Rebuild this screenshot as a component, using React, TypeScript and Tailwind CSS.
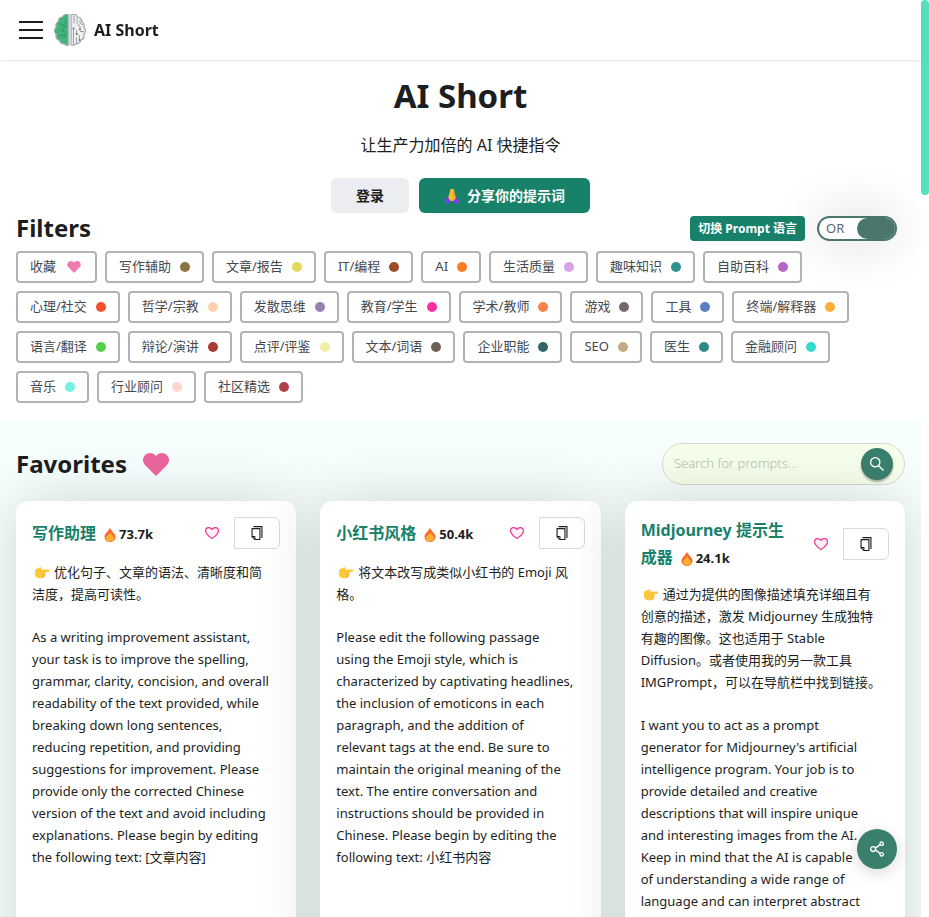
import React from "react";
import { AiOutlineCopy, AiOutlineSearch, AiOutlineShareAlt } from "react-icons/ai";

const filters: { name: string; color: string }[] = [
  { name: "写作辅助", color: "#8a7440" },
  { name: "文章/报告", color: "#e2d95c" },
  { name: "IT/编程", color: "#9c4c27" },
  { name: "AI", color: "#ff7a22" },
  { name: "生活质量", color: "#d9a3e6" },
  { name: "趣味知识", color: "#2f9391" },
  { name: "自助百科", color: "#b566c5" },
  { name: "心理/社交", color: "#f4512c" },
  { name: "哲学/宗教", color: "#ffd1b3" },
  { name: "发散思维", color: "#9a80b0" },
  { name: "教育/学生", color: "#fe2da6" },
  { name: "学术/教师", color: "#ff8048" },
  { name: "游戏", color: "#766770" },
  { name: "工具", color: "#5c7dbe" },
  { name: "终端/解释器", color: "#ffae3b" },
  { name: "语言/翻译", color: "#52d14c" },
  { name: "辩论/演讲", color: "#a83c32" },
  { name: "点评/评鉴", color: "#f0f0a5" },
  { name: "文本/词语", color: "#6f5f56" },
  { name: "企业职能", color: "#336666" },
  { name: "SEO", color: "#c4ab86" },
  { name: "医生", color: "#2f8a89" },
  { name: "金融顾问", color: "#36d9cb" },
  { name: "音乐", color: "#72f0e1" },
  { name: "行业顾问", color: "#ffd6cd" },
  { name: "社区精选", color: "#af4049" },
];

const prompts = [
  {
    title: "写作助理",
    votes: "73.7k",
    remark: "优化句子、文章的语法、清晰度和简洁度，提高可读性。",
    text: "As a writing improvement assistant, your task is to improve the spelling, grammar, clarity, concision, and overall readability of the text provided, while breaking down long sentences, reducing repetition, and providing suggestions for improvement. Please provide only the corrected Chinese version of the text and avoid including explanations. Please begin by editing the following text: [文章内容]",
  },
  {
    title: "小红书风格",
    votes: "50.4k",
    remark: "将文本改写成类似小红书的 Emoji 风格。",
    text: "Please edit the following passage using the Emoji style, which is characterized by captivating headlines, the inclusion of emoticons in each paragraph, and the addition of relevant tags at the end. Be sure to maintain the original meaning of the text. The entire conversation and instructions should be provided in Chinese. Please begin by editing the following text: 小红书内容",
  },
  {
    title: "Midjourney 提示生成器",
    votes: "24.1k",
    remark:
      "通过为提供的图像描述填充详细且有创意的描述，激发 Midjourney 生成独特有趣的图像。这也适用于 Stable Diffusion。或者使用我的另一款工具 IMGPrompt，可以在导航栏中找到链接。",
    text: "I want you to act as a prompt generator for Midjourney's artificial intelligence program. Your job is to provide detailed and creative descriptions that will inspire unique and interesting images from the AI. Keep in mind that the AI is capable of\u00a0understanding a wide range of language and can interpret abstract",
  },
];

function Logo() {
  return (
    <svg viewBox="0 0 32 32" className="size-8" aria-hidden="true">
      <path
        d="M14.5 .7C11 0 9 1.500 8.500 3C6 3 4 5 4.300 7.500C2 9 1.500 11.500 2.300 13.200C0 15 0 18.500 2.200 20C1.500 23 3 25.300 5 26C6 29 8.500 30 10.500 30C12 31.500 13.500 31.500 14.500 31Z"
        fill="#3fb57c"
        stroke="#a3aaa8"
        strokeWidth="1.200"
      />
      <path
        d="M11.500 5.500q1 2.500-1 5M6 9.500q2 2 5 1.500M12.500 12q-3 .5-3.500 3.500M7 15q1.500 3 4 3M5.500 22q3-2.500 6 .5M12 19q-.5 4-3.500 5"
        fill="none"
        stroke="#2f8f62"
        strokeWidth="0.900"
      />
      <path
        d="M17.500 .7C21 0 23 1.500 23.500 3C26 3 28 5 27.700 7.500C30 9 30.500 11.500 29.700 13.200C32 15 32 18.500 29.800 20C30.500 23 29 25.300 27 26C26 29 23.500 30 21.500 30C20 31.500 18.500 31.500 17.500 31Z"
        fill="#eff0f1"
        stroke="#a3aaac"
        strokeWidth="1.200"
      />
      <path d="M14.500 .5h3v31h-3z" fill="#d0d3d4" />
      <path
        d="M20 2v7.500M23 3.500v6l3 2.500v3M26 6v3l3 2M19.500 15v15M22.500 16v3l3 3v3M22.500 23v6M26 17.500h4"
        fill="none"
        stroke="#9aa1a5"
        strokeWidth="1"
      />
      <g fill="#6d777c">
        <circle cx="19.500" cy="14.500" r="1" />
        <circle cx="22.500" cy="20" r="1" />
        <circle cx="26" cy="15.500" r="1" />
        <circle cx="25.500" cy="26" r="1" />
      </g>
    </svg>
  );
}

function Heart({ className }: { className: string }) {
  return (
    <svg viewBox="0 0 26 23" className={className} aria-hidden="true">
      <path
        d="M13 23L2.200 12.200C-.7 9.200-.7 4.800 2 2.200C4.800-.6 9.600-.6 12.200 2.200L13 3L13.800 2.200C16.400-.6 21.200-.6 24 2.200C26.700 4.800 26.700 9.200 23.800 12.200Z"
        fill="currentColor"
      />
    </svg>
  );
}

function HeartOutline() {
  return (
    <svg viewBox="0 0 16 16" className="size-4" aria-hidden="true">
      <path
        d="M8 13.600C5.800 11.800 1.600 9.300 1.600 5.900C1.600 3.900 3 2.600 4.700 2.600C6.200 2.600 7.400 3.400 8 4.500C8.600 3.400 9.800 2.600 11.300 2.600C13 2.600 14.400 3.900 14.400 5.900C14.400 9.300 10.200 11.800 8 13.600Z"
        fill="#fff0f6"
        stroke="#eb2f96"
        strokeWidth="1.200"
        strokeLinejoin="round"
      />
    </svg>
  );
}

function PrayIcon() {
  return (
    <svg viewBox="0 0 16 16" className="size-4" aria-hidden="true">
      <path d="M4 9Q5.200 10 6.400 12.500L5.800 15H2Q.8 15 1 13.500Q1.400 10 4 9Z" fill="#7f3df5" />
      <path d="M12 9Q10.800 10 9.600 12.500L10.200 15H14Q15.200 15 15 13.500Q14.600 10 12 9Z" fill="#7f3df5" />
      <path
        d="M8 1C9 .6 9.900 1.200 10.100 2.200L10.900 6.500L11.700 9Q11.700 11.300 9.600 12.600Q8 13.600 6.400 12.600Q4.300 11.300 4.300 9L5.200 6.500L6.200 2.200C6.400 1.200 7.100.7 8 1Z"
        fill="#ffb92e"
      />
      <path d="M9.300 3L9.800 9.500L8.700 12" stroke="#ef9330" strokeWidth="0.800" fill="none" />
    </svg>
  );
}

function PointIcon() {
  return (
    <svg viewBox="0 0 16 16" className="mr-1 ml-0.5 inline-block size-4 align-[-3px]" aria-hidden="true">
      <path
        d="M1 5.800L5.500 3.500Q7 2.800 7.500 4L7 5.500H14Q15.200 5.600 15.200 6.800T14 8H10.500Q12 8.300 11.800 9.500Q11.700 10.300 11 10.400Q11.700 11 11.300 11.900Q11 12.500 10.200 12.500Q10.500 14 8.800 14.200H5Q1.500 13.800 1 11Z"
        fill="#ffc83d"
      />
      <path d="M7 8H10.500M8 10.400H11M7.800 12.500H10.200" stroke="#f0a830" strokeWidth="0.600" fill="none" />
    </svg>
  );
}

function FireIcon() {
  return (
    <svg viewBox="0 0 12 14" className="mr-[3px] ml-2 inline-block h-3.5 w-3 align-[-3px]" aria-hidden="true">
      <path
        d="M5.500 0C7 1.500 8.300 2.800 9 4.500C10.500 5.500 11.600 7.200 11.500 9C11.200 12.200 9 14 6 14S.8 12.200.5 9C.4 6.500 2 5.500 3 4C4.500 2.600 5.200 1.500 5.500 0Z"
        fill="#fb6a30"
      />
      <path d="M6 4C6.500 6.500 10 7.800 10 10.300C9.800 12.700 8.200 13.600 6 13.600S2.200 12.700 2 10.300C2 7.800 5.500 6.500 6 4Z" fill="#ffb02e" />
    </svg>
  );
}

function Chip({ name, children }: { name: string; children: React.ReactNode }) {
  return (
    <li>
      <button
        type="button"
        className="flex h-8 items-center rounded-[4px] border-2 border-[#b3b3b3] px-3 text-[13px] text-[#444950]"
      >
        {name}
        {children}
      </button>
    </li>
  );
}

function PromptCard({ prompt }: { prompt: (typeof prompts)[number] }) {
  return (
    <li className="rounded-xl bg-white px-4 pt-4 pb-24 shadow-[0_0_60px_rgba(0,0,0,0.17)]">
      <div className="mb-3 flex items-center">
        <h3 className="flex-1 text-base leading-[27px] font-bold">
          <a href="#prompt" className="text-[#18816a]">
            {prompt.title}
          </a>
          <span className="text-[13px] leading-none whitespace-nowrap text-[#1c1e21]">
            <FireIcon />
            {prompt.votes}
          </span>
        </h3>
        <button type="button" aria-label="收藏" className="px-[14px]">
          <HeartOutline />
        </button>
        <button
          type="button"
          aria-label="复制"
          className="flex h-8 w-[46px] items-center justify-center rounded-r-md border border-[#d9d9d9] text-[#1c1e21]"
        >
          <AiOutlineCopy className="size-4" />
        </button>
      </div>
      <p className="pr-1.5 text-[13px] leading-[22px]">
        <PointIcon />
        {prompt.remark}
      </p>
      <p className="mt-[21px] pr-[10px] text-[13px] leading-[22px]">{prompt.text}</p>
    </li>
  );
}

export default function App() {
  return (
    <div className="h-screen overflow-hidden bg-white pr-2 font-['Noto_Sans','Noto_Sans_CJK_SC',sans-serif] text-[#1c1e21]">
      <div className="fixed top-0 right-0 h-[195px] w-2 rounded-full bg-[#55dfc0]" />

      <nav className="relative flex h-[60px] items-center px-4 shadow-[0_1px_2px_rgba(0,0,0,0.1)]">
        <button type="button" aria-label="菜单" className="mr-2">
          <svg viewBox="0 0 30 30" className="size-[30px]" stroke="currentColor" strokeWidth="2">
            <path d="M3 7h24M3 15h24M3 23h24" />
          </svg>
        </button>
        <a href="#home" className="flex items-center gap-2 text-base font-bold">
          <Logo />
          AI Short
        </a>
      </nav>

      <main className="overflow-hidden">
        <header className="pt-3 text-center">
          <h1 className="text-[33px] leading-[48px] font-bold">AI Short</h1>
          <p className="mt-3 text-base leading-[26px]">让生产力加倍的 AI 快捷指令</p>
          <div className="mt-5 flex justify-center gap-[10px] text-sm font-bold">
            <button type="button" className="h-[35px] rounded-md bg-[#ebedf0] px-[25px]">
              登录
            </button>
            <button type="button" className="flex h-[35px] items-center gap-[7px] rounded-md bg-[#18816a] px-[25px] text-white">
              <PrayIcon />
              分享你的提示词
            </button>
          </div>
        </header>

        <section className="px-4">
          <div className="flex h-[31px] items-center">
            <h2 className="flex-1 pb-0.5 text-2xl leading-7 font-bold">Filters</h2>
            <button type="button" className="mr-3 h-[25px] rounded-[4px] bg-[#18816a] px-2 text-xs font-bold text-white">
              切换 Prompt 语言
            </button>
            <label className="mr-2 flex h-[25px] w-20 items-center justify-between overflow-hidden rounded-full border-2 border-[#4a766c] bg-white pl-[7px] text-[13px] text-[#606770] shadow-[0_0_50px_rgba(0,0,0,0.18)]">
              <input type="checkbox" className="sr-only" />
              OR
              <span className="h-full w-[38px] rounded-l-full bg-[#4a766c]" />
            </label>
          </div>
          <ul className="relative mt-[7px] flex flex-wrap gap-2">
            <Chip name="收藏">
              <Heart className="mr-0.5 ml-[11px] h-3 w-3.5 text-[#f07ab0]" />
            </Chip>
            {filters.map((filter) => (
              <Chip key={filter.name} name={filter.name}>
                <span className="ml-[9px] size-2.5 rounded-full" style={{ backgroundColor: filter.color }} />
              </Chip>
            ))}
          </ul>
        </section>

        <section className="mt-4 bg-[#f6fffd] px-4 pt-6 pb-8">
          <div className="mb-4 flex h-[42px] items-center">
            <h2 className="text-2xl font-bold">Favorites</h2>
            <Heart className="ml-4 h-[23px] w-[26px] text-[#ec669f]" />
            <div className="ml-auto flex h-[42px] w-[243px] items-center rounded-full border border-[#d5dad2] bg-[#f6ffeb] px-[11px]">
              <input
                type="search"
                aria-label="Search for prompts"
                placeholder="Search for prompts..."
                className="min-w-0 flex-1 bg-transparent text-[13px] font-light outline-none placeholder:text-[#b5c1ad]"
              />
              <button
                type="button"
                aria-label="Search"
                className="flex size-8 items-center justify-center rounded-full bg-[#3a806c] text-white shadow-[0_2px_2px_rgba(0,0,0,0.3)]"
              >
                <AiOutlineSearch className="size-[18px]" />
              </button>
            </div>
          </div>
          <ul className="grid grid-cols-3 gap-6">
            {prompts.map((prompt) => (
              <PromptCard key={prompt.title} prompt={prompt} />
            ))}
          </ul>
        </section>
      </main>

      <button
        type="button"
        aria-label="分享"
        className="fixed right-8 bottom-12 flex size-10 items-center justify-center rounded-full bg-[#3a806c] text-white shadow-[0_4px_16px_rgba(0,0,0,0.15)]"
      >
        <AiOutlineShareAlt className="size-5" />
      </button>
    </div>
  );
}
